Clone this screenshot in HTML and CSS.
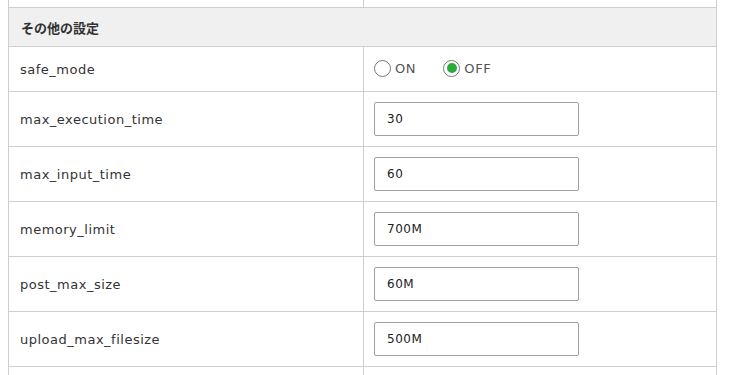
FILE: index.html
```html
<!DOCTYPE html>
<html lang="ja">
<head>
    <meta charset="UTF-8">
    <meta name="viewport" content="width=device-width, initial-scale=1.0">
    <title>PHP設定</title>
    <link rel="stylesheet" href="styles.css">
</head>
<body>

<table class="settings">
    <tr class="prev-row">
        <td class="label"></td>
        <td class="value"></td>
    </tr>
    <tr class="section">
        <th colspan="2">その他の設定</th>
    </tr>
    <tr class="radio-row">
        <td class="label">safe_mode</td>
        <td class="value">
            <label class="radio"><input type="radio" name="safe_mode" value="on"><span class="mark"></span>ON</label>
            <label class="radio"><input type="radio" name="safe_mode" value="off" checked><span class="mark"></span>OFF</label>
        </td>
    </tr>
    <tr>
        <td class="label">max_execution_time</td>
        <td class="value"><input type="text" class="field" value="30"></td>
    </tr>
    <tr>
        <td class="label">max_input_time</td>
        <td class="value"><input type="text" class="field" value="60"></td>
    </tr>
    <tr>
        <td class="label">memory_limit</td>
        <td class="value"><input type="text" class="field" value="700M"></td>
    </tr>
    <tr>
        <td class="label">post_max_size</td>
        <td class="value"><input type="text" class="field" value="60M"></td>
    </tr>
    <tr>
        <td class="label">upload_max_filesize</td>
        <td class="value"><input type="text" class="field" value="500M"></td>
    </tr>
    <tr>
        <td class="label">&nbsp;</td>
        <td class="value"></td>
    </tr>
</table>

</body>
</html>
```

FILE: styles.css
```css
body {
    margin: 0;
    background: #fff;
    font-family: "DejaVu Sans", "Noto Sans CJK JP", sans-serif;
    font-size: 13px;
    color: #333;
}
.settings {
    margin-left: 8px;
    width: 709px;
    border-collapse: collapse;
    table-layout: fixed;
}
.settings td, .settings th {
    border: 1px solid #cfcfcf;
    padding: 0;
    text-align: left;
    vertical-align: middle;
}
.settings .prev-row td {
    border-top: none;
    height: 7px;
}
.section th {
    background: #f0f0f0;
    height: 38px;
    padding-left: 12px;
    font-family: "Noto Sans CJK JP", sans-serif;
    font-weight: bold;
    font-size: 13px;
}
.label {
    width: 343px;
    padding-left: 11px !important;
    height: 54px;
    letter-spacing: 0.5px;
}
.radio-row .label, .radio-row .value {
    height: 44px;
}
.value {
    padding-left: 10px !important;
}
.field {
    width: 205px;
    height: 34px;
    box-sizing: border-box;
    border: 1px solid #a0a0a0;
    border-radius: 2px;
    padding: 0 12px;
    font-family: "DejaVu Sans", sans-serif;
    font-size: 12px;
    letter-spacing: 0.5px;
    color: #222;
    margin: 0;
    display: block;
}
.radio {
    display: inline-flex;
    align-items: center;
    vertical-align: middle;
    margin-top: -3px;
    margin-right: 23px;
    color: #555;
    letter-spacing: 0.6px;
    cursor: pointer;
}
.radio input {
    display: none;
}
.mark {
    width: 17px;
    height: 17px;
    box-sizing: border-box;
    border: 1px solid #777;
    border-radius: 50%;
    margin-right: 4px;
    display: flex;
    align-items: center;
    justify-content: center;
}
.radio input:checked + .mark::after {
    content: "";
    display: block;
    width: 10px;
    height: 10px;
    border-radius: 50%;
    background: #2bab3e;
}
```
